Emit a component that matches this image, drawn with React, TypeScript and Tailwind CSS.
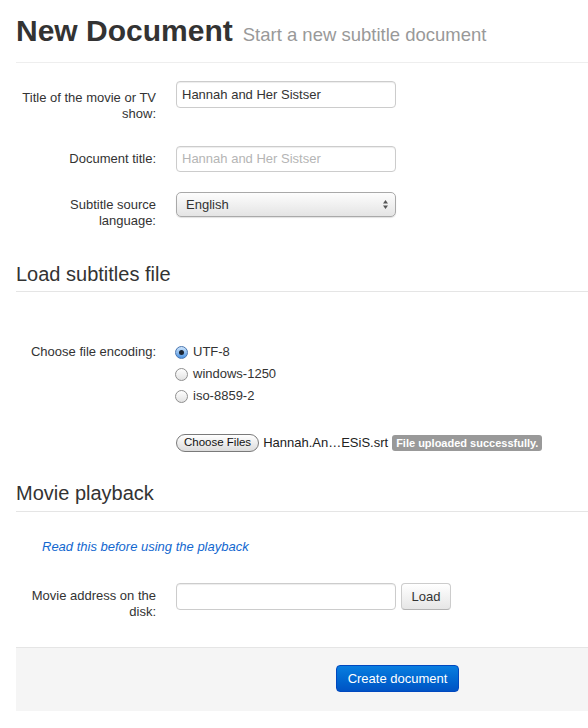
import React from 'react';

const font = { fontFamily: '"Liberation Sans", Arial, Helvetica, sans-serif' };

const Label: React.FC<{ children: React.ReactNode; pt?: string }> = ({ children, pt = 'pt-[5px]' }) => (
  <div className={`w-[140px] shrink-0 text-right leading-[16px] ${pt}`}>{children}</div>
);

const Radio: React.FC<{ checked?: boolean; label: string }> = ({ checked, label }) => (
  <div className="flex h-[22px] items-center">
    {checked ? (
      <span className="flex h-[13px] w-[13px] items-center justify-center rounded-full border border-[#4a76b0] bg-gradient-to-b from-[#cfe6fb] to-[#4a93e2]">
        <span className="h-[5px] w-[5px] rounded-full bg-[#1b2533]" />
      </span>
    ) : (
      <span className="h-[13px] w-[13px] rounded-full border border-[#8f8f8f] bg-gradient-to-b from-[#ffffff] to-[#e2e2e2]" />
    )}
    <span className="ml-[5px] leading-[16px]">{label}</span>
  </div>
);

const SectionHeading: React.FC<{ children: React.ReactNode; mt: string; pb: string }> = ({ children, mt, pb }) => (
  <div className={`${mt} ${pb} border-b border-[#e5e5e5] text-[20px] leading-[24px] text-[#333]`}>{children}</div>
);

export default function App() {
  return (
    <div className="min-h-screen w-full bg-white text-[13px] text-[#333]" style={font}>
      <div className="flex flex-col pl-4">
        {/* page header */}
        <div className="flex items-baseline border-b border-[#eeeeee] pt-[13px] pb-[13px]">
          <h1 className="text-[30px] font-bold leading-[36px] text-[#333]">New Document</h1>
          <span className="ml-[10px] text-[18.5px] text-[#999]">Start a new subtitle document</span>
        </div>

        {/* details */}
        <div className="mt-[18px] flex items-start">
          <Label pt="pt-[9px]">
            Title of the movie or TV
            <br />
            show:
          </Label>
          <div className="ml-5 flex h-[27px] w-[220px] items-center rounded-[4px] border border-[#cccccc] px-[5px] shadow-[inset_0_1px_1px_rgba(0,0,0,0.075)]">
            Hannah and Her Sistser
          </div>
        </div>

        <div className="mt-[24px] flex items-start">
          <Label>Document title:</Label>
          <div className="ml-5 flex h-[26px] w-[220px] items-center rounded-[4px] border border-[#cccccc] px-[5px] text-[#b5b5b5] shadow-[inset_0_1px_1px_rgba(0,0,0,0.075)]">
            Hannah and Her Sistser
          </div>
        </div>

        <div className="mt-[20px] flex items-start">
          <Label>
            Subtitle source
            <br />
            language:
          </Label>
          <div className="ml-5 flex h-[25px] w-[220px] items-center justify-between rounded-[5px] border border-[#a9a9a9] bg-gradient-to-b from-[#fdfdfd] to-[#e4e4e4] pl-[9px] pr-[6px] shadow-[0_1px_1px_rgba(0,0,0,0.12)]">
            <span>English</span>
            <svg width="7" height="11" viewBox="0 0 7 11">
              <path d="M3.5 1 L6 4.5 L1 4.5 Z" fill="#555" />
              <path d="M3.5 10 L6 6.5 L1 6.5 Z" fill="#555" />
            </svg>
          </div>
        </div>

        {/* load subtitles */}
        <SectionHeading mt="mt-[33px]" pb="pb-[5px]">Load subtitles file</SectionHeading>

        <div className="mt-[49px] flex items-start">
          <Label pt="pt-[3px]">Choose file encoding:</Label>
          <div className="ml-[19px] flex flex-col">
            <Radio checked label="UTF-8" />
            <Radio label="windows-1250" />
            <Radio label="iso-8859-2" />
          </div>
        </div>

        <div className="mt-[27px] ml-[160px] flex h-[18px] items-center">
          <span className="flex h-[18px] items-center rounded-full border border-[#7a7a7a] bg-gradient-to-b from-[#ffffff] to-[#dcdcdc] px-[7px] text-[11.5px] text-[#111]">
            Choose Files
          </span>
          <span className="ml-[4px] text-[13px] text-[#222]">Hannah.An…ESiS.srt</span>
          <span className="ml-[4px] rounded-[3px] bg-[#999999] px-[4px] py-[1px] text-[11px] font-bold leading-[14px] text-white">
            File uploaded successfully.
          </span>
        </div>

        {/* movie playback */}
        <SectionHeading mt="mt-[29px]" pb="pb-[6px]">Movie playback</SectionHeading>

        <a href="#" className="mt-[27px] ml-[26px] self-start italic leading-[16px] text-[#1267cf]">
          Read this before using the playback
        </a>

        <div className="mt-[28px] flex items-start">
          <Label>
            Movie address on the
            <br />
            disk:
          </Label>
          <div className="ml-5 h-[27px] w-[220px] rounded-[4px] border border-[#cccccc] shadow-[inset_0_1px_1px_rgba(0,0,0,0.075)]" />
          <button className="ml-[5px] flex h-[27px] w-[50px] items-center justify-center rounded-[4px] border border-[#cccccc] border-b-[#b3b3b3] bg-gradient-to-b from-[#ffffff] to-[#e6e6e6] text-[13px] text-[#333]">
            Load
          </button>
        </div>

        {/* actions */}
        <div className="mt-[27px] h-[64px] border-t border-[#e5e5e5] bg-[#f5f5f5] pt-[17px] pl-[320px]">
          <button className="flex h-[27px] w-[123px] items-center justify-center rounded-[4px] border border-[#0048bf] bg-gradient-to-b from-[#0a7ee0] to-[#0053c4] text-[13px] text-white">
            Create document
          </button>
        </div>
      </div>
    </div>
  );
}
